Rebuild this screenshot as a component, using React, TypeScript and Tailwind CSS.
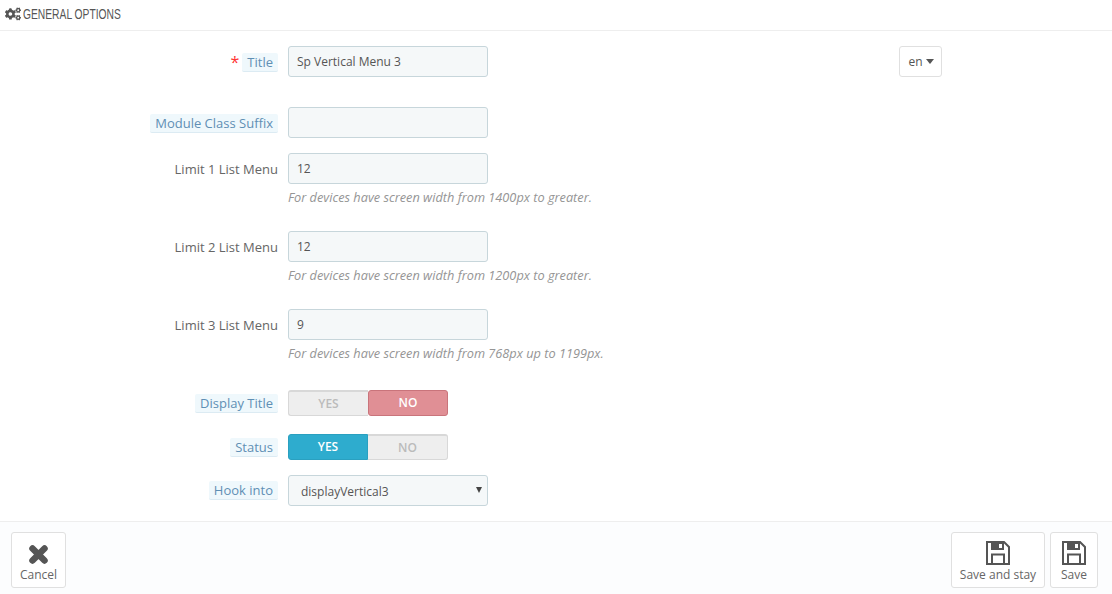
import { FaCogs } from 'react-icons/fa'

const labelHint = 'rounded-[2px] bg-[#eff8fc] border-b border-[#dcebf3] px-[5px] text-[#5f8fb4]'

function Label({ text, hint, required }: { text: string; hint?: boolean; required?: boolean }) {
  return (
    <div className="w-[278px] shrink-0 flex justify-end items-center text-[13px] leading-[18px] text-[#666]">
      {required && <span className="mr-[3px] text-[#f33] text-[16px] leading-[18px]">*</span>}
      <span className={hint ? labelHint : ''}>{text}</span>
    </div>
  )
}

function TextRow({ label, value, hint, help, required, className }: {
  label: string
  value?: string
  hint?: boolean
  help?: string
  required?: boolean
  className?: string
}) {
  return (
    <div className={className}>
      <div className="flex items-center gap-[10px] pt-px">
        <Label text={label} hint={hint} required={required} />
        <div className="w-[200px] h-[31px] -mt-px px-[8px] flex items-center rounded-[3px] border border-[#c7d6db] bg-[#f5f8f9] text-[12px] text-[#555]">
          {value}
        </div>
      </div>
      {help && <p className="ml-[288px] mt-[5px] text-[12.76px] leading-[16px] italic text-[#959595]">{help}</p>}
    </div>
  )
}

function Switch({ label, yes, className }: { label: string; yes: boolean; className?: string }) {
  const off = 'w-[80px] flex items-center justify-center text-[#bbb] bg-[#eee] border border-[#d8d8d8] border-t-2'
  return (
    <div className={`flex items-center gap-[10px] ${className}`}>
      <Label text={label} hint />
      <div className="w-[160px] h-[26px] flex text-[12px] font-semibold">
        {yes ? (
          <>
            <div className="w-[80px] flex items-center justify-center rounded-l-[3px] bg-[#2eacce] border border-[#2aa0c0] text-white">YES</div>
            <div className={`${off} rounded-r-[3px] border-l-0`}>NO</div>
          </>
        ) : (
          <>
            <div className={`${off} rounded-l-[3px] border-r-0`}>YES</div>
            <div className="w-[80px] flex items-center justify-center rounded-[3px] bg-[#e08f95] border border-[#c9747b] text-white">NO</div>
          </>
        )}
      </div>
    </div>
  )
}

function ActionButton({ label, icon, className }: { label: string; icon: React.ReactNode; className?: string }) {
  return (
    <button className={`h-[56px] flex flex-col items-center rounded-[3px] border border-[#e0e0e0] bg-white pt-[6px] text-[12px] leading-[16px] text-[#666] ${className}`}>
      <span className="h-[28px] flex items-center">{icon}</span>
      {label}
    </button>
  )
}

function CancelIcon() {
  return (
    <svg width="21" height="21" viewBox="0 0 21 21" className="mt-[3px]">
      <path d="M4.5 4.5 L16.5 16.5 M16.5 4.5 L4.5 16.5" stroke="#555" strokeWidth="6.5" strokeLinecap="round" fill="none" />
    </svg>
  )
}

function SaveIcon() {
  return (
    <svg width="24" height="24" viewBox="0 0 24 24">
      <path d="M1 1 H18 L23 6 V23 H1 Z" stroke="#555" strokeWidth="2" fill="none" />
      <path fillRule="evenodd" d="M5 1 H18 V9 H5 Z M13 3 V7 H16 V3 Z" fill="#555" />
      <path d="M6 23 V13.5 H18 V23" stroke="#555" strokeWidth="2" fill="none" />
    </svg>
  )
}

export default function App() {
  return (
    <div className="w-[1112px] h-[594px] flex flex-col bg-white font-['Open_Sans',sans-serif] overflow-hidden">
      <div className="h-[31px] shrink-0 flex items-center gap-[2px] pl-[5px] pb-[2px] border-b border-[#eee] text-[#555]">
        <FaCogs className="text-[16px]" />
        <span className="origin-left scale-x-[0.685] whitespace-nowrap font-['Liberation_Sans',sans-serif] text-[15px] leading-[16px]">GENERAL OPTIONS</span>
      </div>

      <div className="flex-1 relative pt-[15px]">
        <TextRow label="Title" value="Sp Vertical Menu 3" hint required />
        <button className="absolute left-[899px] top-[15px] w-[43px] h-[31px] flex items-center justify-center gap-[3px] pl-[1px] rounded-[3px] border border-[#e0e0e0] bg-white text-[12px] text-[#555]">
          en
          <span className="w-0 h-0 border-x-[4px] border-x-transparent border-t-[5px] border-t-[#555]" />
        </button>
        <TextRow label="Module Class Suffix" hint className="mt-[30px]" />
        <TextRow label="Limit 1 List Menu" value="12" help="For devices have screen width from 1400px to greater." className="mt-[15px]" />
        <TextRow label="Limit 2 List Menu" value="12" help="For devices have screen width from 1200px to greater." className="mt-[26px]" />
        <TextRow label="Limit 3 List Menu" value="9" help="For devices have screen width from 768px up to 1199px." className="mt-[26px]" />
        <Switch label="Display Title" yes={false} className="mt-[29px]" />
        <Switch label="Status" yes className="mt-[18px]" />
        <div className="flex items-center gap-[10px] mt-[15px]">
          <Label text="Hook into" hint />
          <div className="relative w-[200px] h-[31px] pl-[12px] pt-[2px] flex items-center rounded-[3px] border border-[#c7d6db] bg-[#f5f8f9] text-[12px] text-[#555]">
            displayVertical3
            <span className="absolute right-[5px] top-[11px] w-0 h-0 border-x-[3px] border-x-transparent border-t-[6px] border-t-[#444]" />
          </div>
        </div>
      </div>

      <div className="h-[73px] shrink-0 flex items-start justify-between px-[11px] pr-[14px] pt-[10px] border-t border-[#eee] bg-[#fcfdfe]">
        <ActionButton label="Cancel" icon={<CancelIcon />} className="w-[55px]" />
        <div className="flex gap-[5px]">
          <ActionButton label="Save and stay" icon={<SaveIcon />} className="w-[94px]" />
          <ActionButton label="Save" icon={<SaveIcon />} className="w-[48px]" />
        </div>
      </div>
    </div>
  )
}
